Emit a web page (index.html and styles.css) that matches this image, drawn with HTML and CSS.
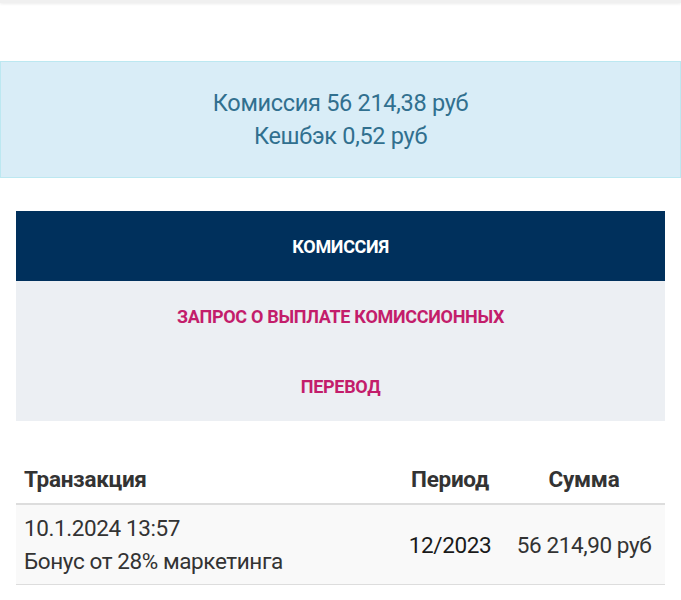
FILE: index.html
```html
<!DOCTYPE html>
<html lang="ru">
<head>
  <meta charset="UTF-8" />
  <meta name="viewport" content="width=device-width, initial-scale=1.0" />
  <title>Комиссия</title>
  <link rel="stylesheet" href="styles.css">
</head>
<body>
  <div class="top-bar"></div>
  <!-- Balance summary -->
  <div class="alert-info">
    <div>Комиссия 56 214,38 руб</div>
    <div>Кешбэк 0,52 руб</div>
  </div>
  <!-- Section tabs -->
  <nav class="tabs">
    <a class="tab active" href="#">КОМИССИЯ</a>
    <a class="tab" href="#">ЗАПРОС О ВЫПЛАТЕ КОМИССИОННЫХ</a>
    <a class="tab" href="#">ПЕРЕВОД</a>
  </nav>
  <div class="table-wrap">
    <table class="tx-table">
      <thead>
        <tr>
          <th class="col-tx">Транзакция</th>
          <th class="col-num col-period">Период</th>
          <th class="col-num col-sum">Сумма</th>
        </tr>
      </thead>
      <tbody>
        <tr>
          <td class="col-tx">10.1.2024 13:57<br>Бонус от 28% маркетинга</td>
          <td class="col-num period">12/2023</td>
          <td class="col-num">56 214,90 руб</td>
        </tr>
      </tbody>
    </table>
  </div>
</body>
</html>
```

FILE: styles.css
```css
body {
  margin: 0;
  background: #fff;
  font-family: Roboto, 'Noto Sans', sans-serif;
  color: #333;
}
.top-bar {
  height: 3px;
  background: #f0f0f0;
  box-shadow: 0 1px 3px rgba(0,0,0,0.08);
  margin-bottom: 58px;
}
/* Info alert */
.alert-info {
  background: #d9edf7;
  border: 1px solid #bce8f1;
  color: #31708f;
  text-align: center;
  font-size: 23.5px;
  letter-spacing: -0.3px;
  line-height: 33px;
  padding: 25px 15px 24px;
}
/* Tabs */
.tabs {
  margin: 33px 16px 0;
  background: #eceff3;
  display: flex;
  flex-direction: column;
}
.tab {
  display: flex;
  align-items: center;
  justify-content: center;
  height: 70px;
  color: #c31d6b;
  font-weight: 700;
  font-size: 18px;
  text-decoration: none;
  letter-spacing: -0.3px;
}
.tab.active {
  background: #00305c;
  color: #fff;
}
/* Transactions table */
.table-wrap {
  margin: 34px 16px 0;
}
.tx-table {
  width: 100%;
  border-collapse: collapse;
  font-size: 22.5px;
}
.tx-table th {
  font-weight: 700;
  color: #333;
  padding: 10px 8px 9px;
  line-height: 29px;
  border-bottom: 2px solid #ddd;
  letter-spacing: -0.3px;
}
.tx-table td {
  background: #f9f9f9;
  padding: 7px 8px 6px;
  line-height: 33px;
  border-bottom: 1px solid #ddd;
  color: #333;
  letter-spacing: -0.4px;
}
.col-tx {
  text-align: left;
}
.col-num {
  text-align: center;
  white-space: nowrap;
}
.col-period {
  width: 90px;
}
.col-sum {
  width: 146px;
}
.tx-table td.period {
  color: #1a1a1a;
}
```
